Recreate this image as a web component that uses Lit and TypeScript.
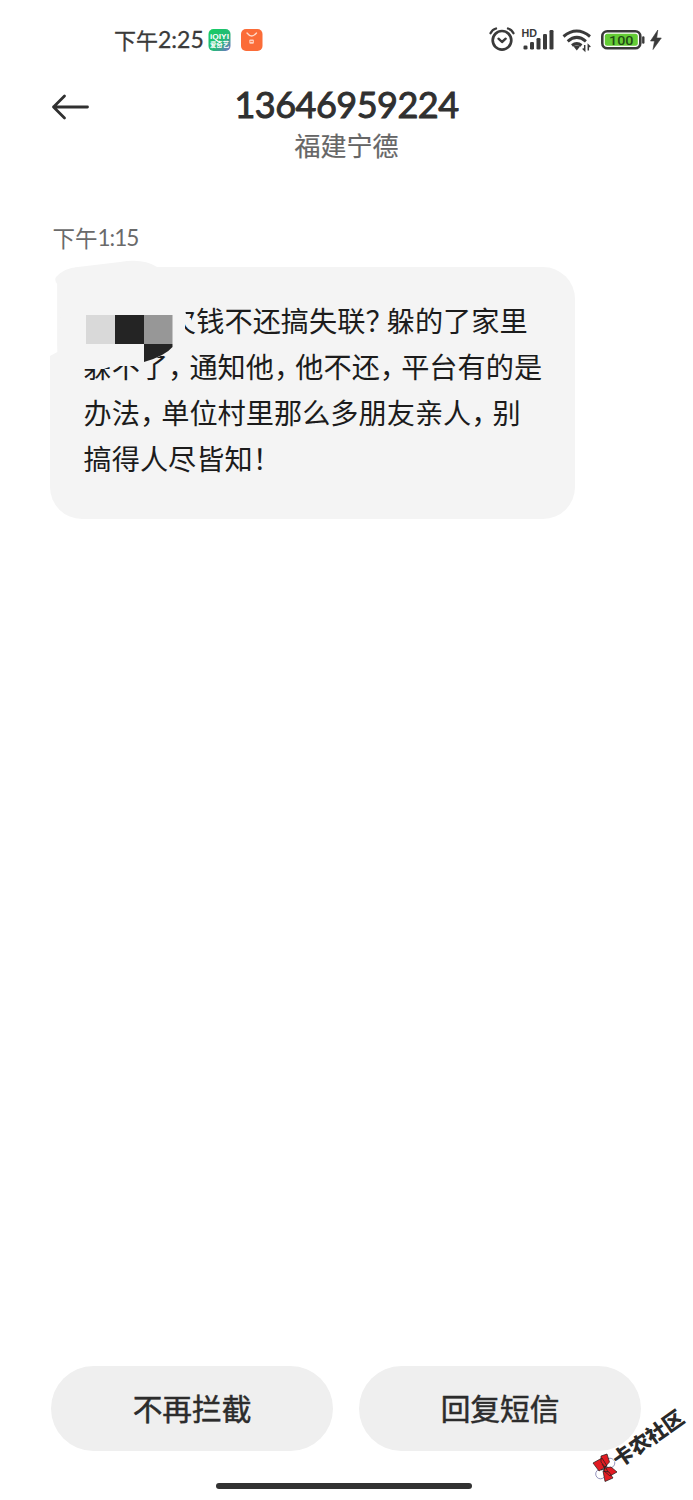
import { LitElement, html, css, svg } from "lit";
import { customElement } from "lit/decorators.js";

const SIGNAL = [
  [523.5, 45.5, 4],
  [530, 42, 7.5],
  [536.5, 38, 11.5],
  [543, 34, 15.5],
  [549.5, 30, 19.5],
];

@customElement("status-bar")
class StatusBar extends LitElement {
  static styles = css`
    :host { display: flex; height: 80px; box-sizing: border-box; padding: 26px 30px 0 114px; justify-content: space-between; align-items: flex-start; color: #3a3a3a; }
    .left { display: flex; align-items: center; height: 28px; }
    .time { font: 400 22px/28px "Noto Sans CJK SC", sans-serif; -webkit-text-stroke: 0.3px #3a3a3a; white-space: nowrap; width: 94px; height: 28px; margin-top: -2px; display: flex; }
    .digits { font: 400 23px/29px Lato, sans-serif; }
    .apps { width: 56px; height: 28px; flex: none; }
    .right { width: 176px; height: 28px; flex: none; }
    .tiny { font: 700 7px "Liberation Sans", sans-serif; fill: #fff; }
    .cjk { font: 700 7px "Noto Sans CJK SC", sans-serif; fill: #fff; }
    .hd { font: 700 10px "Liberation Sans", sans-serif; fill: #3a3a3a; }
    .level { font: 500 13.500px Roboto, sans-serif; fill: #214b15; }
  `;
  render() {
    return html`
      <div class="left">
        <div class="time"><span>下午</span><span class="digits">2:25</span></div>
        <svg class="apps" viewBox="208 26 56 28">
          <defs>
            <linearGradient id="g" x1="0" y1="0" x2="1" y2="1">
              <stop offset="0" stop-color="#14cf61" /><stop offset=".6" stop-color="#27b878" /><stop offset="1" stop-color="#7a6bd0" />
            </linearGradient>
          </defs>
          <rect x="208.500" y="29" width="22" height="22" rx="5" fill="url(#g)" />
          <text class="tiny" x="210" y="38.800" textLength="19" lengthAdjust="spacingAndGlyphs">iQIYI</text>
          <text class="cjk" x="210" y="47" textLength="19" lengthAdjust="spacingAndGlyphs">爱奇艺</text>
          <rect x="241" y="29" width="21.500" height="22" rx="5" fill="#fb6c38" />
          <path d="M247 33q4.700 6 9.500 0" fill="none" stroke="#ffd9c8" stroke-width="1.300" stroke-linecap="round" />
          <rect x="249.300" y="39.500" width="4.600" height="4.300" rx="1" fill="#ffd0bc" />
          <path d="M250.300 41.500h2.600" stroke="#fb6c38" stroke-width=".8" />
        </svg>
      </div>
      <svg class="right" viewBox="487 26 176 28">
        <g fill="none" stroke="#3a3a3a" stroke-linecap="round">
          <circle cx="502" cy="40.300" r="9.300" stroke-width="2.700" />
          <path d="M490.500 33.200q1.800-3.800 5.500-4.700M513.500 33.200q-1.800-3.800-5.500-4.700" stroke-width="2.300" />
          <path d="M498.500 38.700l3.500 3.300 3.700-3.300" stroke-width="2.400" stroke-linejoin="round" />
        </g>
        <text class="hd" x="521.500" y="37.300" textLength="15.500" lengthAdjust="spacingAndGlyphs">HD</text>
        ${SIGNAL.map(([x, y, h]) => svg`<rect x=${x} y=${y} width="4" height=${h} rx="1.300" fill="#3a3a3a" />`)}
        <g fill="none" stroke="#3a3a3a" stroke-width="3">
          <path d="M563.500 36.500q13.200-11 26.500 0" />
          <path d="M567.700 41.300q9.100-7.800 18.200 0" />
          <path d="M572 45.500q4.800-3.800 9.500 0" />
        </g>
        <path d="M573.600 46.500q3.300-1.800 6.400 0l-3.200 4z" fill="#3a3a3a" />
        <path d="M584.700 45v5.500l-2-2M588.300 50.500v-5.500l2 2" fill="none" stroke="#3a3a3a" stroke-width="1.500" />
        <rect x="602.300" y="31.300" width="38" height="17" rx="5" fill="#fff" stroke="#3a3a3a" stroke-width="2.600" />
        <rect x="604.800" y="33.800" width="33" height="12" rx="2.500" fill="#64cc35" />
        <text class="level" x="609" y="44.700" textLength="24.500" lengthAdjust="spacingAndGlyphs">100</text>
        <path d="M643.300 37.500v5" stroke="#3a3a3a" stroke-width="2.400" stroke-linecap="round" />
        <path d="M657.800 30l-7.300 11h4l-1.500 8.500 8.300-11.500h-4.600z" fill="#3a3a3a" stroke="#3a3a3a" stroke-width=".6" />
      </svg>
    `;
  }
}

@customElement("message-bubble")
class MessageBubble extends LitElement {
  static styles = css`
    :host { display: block; position: relative; width: 525px; height: 251.500px; box-sizing: border-box; background: #f4f4f4; border-radius: 32px; padding: 30px 0 0 33.500px; color: #1c1c1c; font: 400 28.200px/46px "Noto Sans CJK SC", sans-serif; }
    .line { display: flex; position: relative; height: 46px; white-space: nowrap; }
    .mark { width: 21.300px; flex: none; font-feature-settings: "halt" 1; }
    .gap { width: 84.600px; flex: none; }
    .smudge { position: absolute; left: -2px; top: -8px; width: 160px; height: 130px; overflow: visible; }
    .back { position: absolute; left: -2px; top: -8px; width: 130px; height: 110px; }
  `;
  render() {
    const parts = (s: string) =>
      s.split(/([，？！])/).filter(Boolean).map((t) => /[，？！]/.test(t) ? html`<span class="mark">${t}</span>` : html`<span>${t}</span>`);
    return html`
      <svg class="back" viewBox="48 259 130 110">
        <path d="M48 259H178V266.800H76L48 281z" fill="#fff" />
        <path d="M48 266H57.300V352L50 356V347H48z" fill="#fff" />
        <path d="M57.300 352V284Q54 280 56 277Q64 268 78 267L120 262Q143 258 157 267H178V300H62z" fill="#f4f4f4" />
      </svg>
      <div class="line"><span class="gap"></span>${parts("欠钱不还搞失联？躲的了家里")}</div>
      <div class="line">${parts("躲不了，通知他，他不还，平台有的是")}</div>
      <div class="line">${parts("办法，单位村里那么多朋友亲人，别")}</div>
      <div class="line">${parts("搞得人尽皆知！")}</div>
      <svg class="smudge" viewBox="48 259 160 130">
        <path d="M76 300H185V310L187 318H191V324H185V345L172 347L165 354L152 360L144 364L134 366L112 366L104 369L82 369L76 371z" fill="#f4f4f4" />
        <path d="M86 315h29v29H86z" fill="#d9d9d9" />
        <path d="M115 315h29v29h-29z" fill="#242424" />
        <path d="M144 315h28.500v29H144z" fill="#979797" />
        <path d="M144 344h28.500v3Q165 356 144 362z" fill="#242424" />
      </svg>
    `;
  }
}

@customElement("site-mark")
class SiteMark extends LitElement {
  static styles = css`
    :host { display: block; position: absolute; left: 580px; top: 1395px; width: 113px; height: 105px; }
    .word { font: 900 20.500px "Noto Sans CJK SC", sans-serif; fill: #292929; stroke: #fff; stroke-width: 1.500px; paint-order: stroke; }
  `;
  render() {
    return html`
      <svg width="113" height="105" viewBox="0 0 113 105">
        <g stroke="#1b1b1b" stroke-width=".7">
          <circle cx="30" cy="68" r="4.800" fill="#fff" stroke="#6967a0" />
          <circle cx="20.500" cy="79" r="4.800" fill="#fff" stroke="#6967a0" />
          <path d="M13 68l9-5 5 8-8 5zM21 61l6-2 2.500 8-4.500 5-4-5zM24 73l7-1 6 5-7 4-6-5zM23 76l6 1 4 6-8 3.500z" fill="#e21b22" />
          <path d="M22 69l3 5-4 1M25 71l3 6" fill="none" />
        </g>
        <text class="word" transform="translate(39 73) rotate(-35)" textLength="81.500">卡农社区</text>
      </svg>
    `;
  }
}

@customElement("app-root")
class AppRoot extends LitElement {
  static styles = css`
    :host { display: flex; flex-direction: column; position: relative; width: 693px; height: 1500px; background: #fff; overflow: hidden; font-family: "Noto Sans CJK SC", sans-serif; }
    .header { display: grid; grid-template-columns: 52px 1fr 52px; height: 145px; }
    .arrow { width: 40px; height: 30px; margin: 12px 0 0 50px; }
    .title { display: flex; flex-direction: column; align-items: center; }
    .number { font: 400 36px/48px Lato, sans-serif; color: #303030; -webkit-text-stroke: 1px #303030; letter-spacing: -0.500px; }
    .place { font: 400 26px/34px "Noto Sans CJK SC", sans-serif; color: #666; -webkit-text-stroke: 0.2px #666; }
    .stamp { display: flex; height: 42px; padding-left: 52.500px; font: 400 22.500px/24px "Noto Sans CJK SC", sans-serif; color: #6a6a6a; }
    .stamp-digits { font: 400 22.500px/26px Lato, sans-serif; letter-spacing: -1px; }
    .thread { flex: 1; padding-left: 50px; }
    .actions { display: flex; gap: 26px; padding: 0 52px 0 51px; height: 84.500px; }
    .button { flex: 1; border: 0; border-radius: 43px; background: #efefef; padding: 0; font: 400 29.700px/84px "Noto Sans CJK SC", sans-serif; color: #2c2c2c; -webkit-text-stroke: 0.5px #2c2c2c; }
    .home { width: 256px; height: 6px; border-radius: 3px; background: #323232; margin: 32.500px 0 11px 216px; flex: none; }
  `;
  render() {
    return html`
      <status-bar></status-bar>
      <div class="header">
        <svg class="arrow" viewBox="50 92 40 30" fill="none" stroke="#303030" stroke-width="2.800" stroke-linecap="round" stroke-linejoin="round"><path d="M53.500 107H87.500M64.500 96L53.500 107L64.500 118" /></svg>
        <div class="title"><div class="number">13646959224</div><div class="place">福建宁德</div></div>
      </div>
      <div class="stamp"><span>下午</span><span class="stamp-digits">1:15</span></div>
      <div class="thread"><message-bubble></message-bubble></div>
      <div class="actions"><button class="button">不再拦截</button><button class="button">回复短信</button></div>
      <div class="home"></div>
      <site-mark></site-mark>
    `;
  }
}
